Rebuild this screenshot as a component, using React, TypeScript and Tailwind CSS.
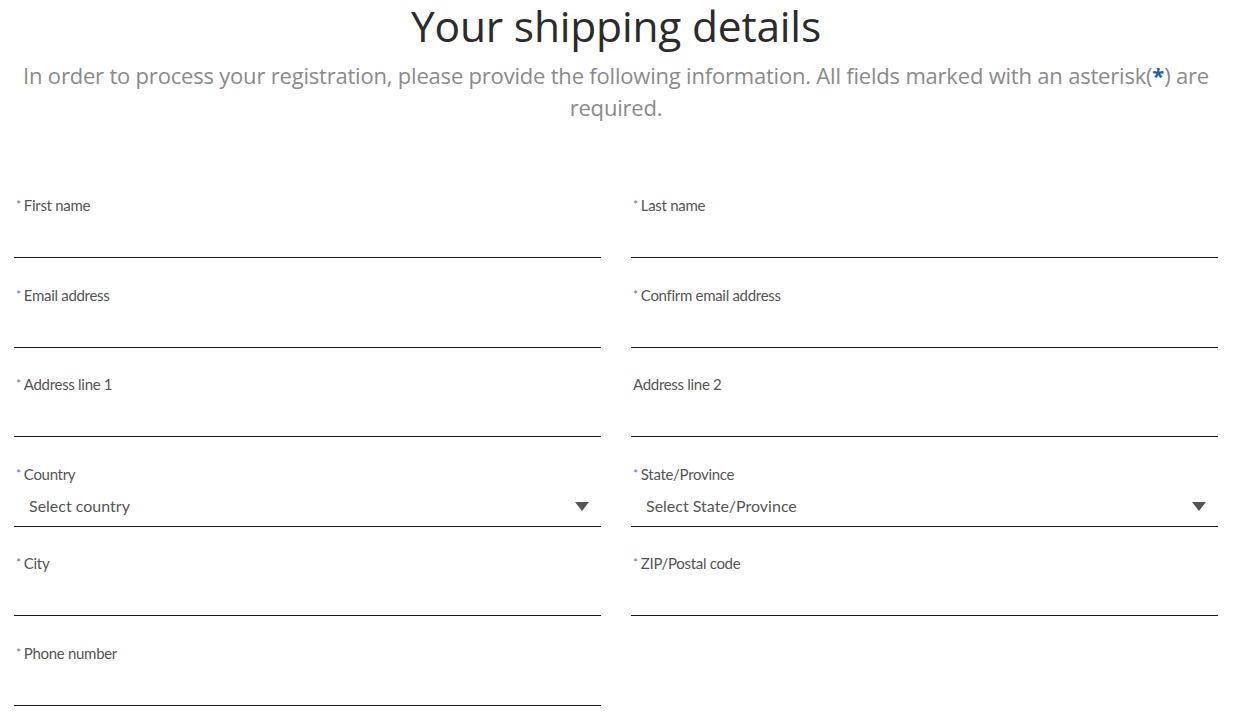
import React from 'react';

type Field = {
    label: string;
    required?: boolean;
    select?: string;
};

const rows: Field[][] = [
    [{label: 'First name', required: true}, {label: 'Last name', required: true}],
    [{label: 'Email address', required: true}, {label: 'Confirm email address', required: true}],
    [{label: 'Address line 1', required: true}, {label: 'Address line 2'}],
    [{label: 'Country', required: true, select: 'Select country'}, {label: 'State/Province', required: true, select: 'Select State/Province'}],
    [{label: 'City', required: true}, {label: 'ZIP/Postal code', required: true}],
    [{label: 'Phone number', required: true}],
];

function FormField({field}: {field: Field}) {
    return (
        <div className="flex flex-col">
            <label className="flex items-start text-[15px] leading-[16px] text-[#555] pl-[2px] tracking-[-0.3px]">
                {field.required && <span className="text-[#4a78c0] text-[12px] leading-[14px] mt-[1px] mr-[3px]">*</span>}
                {field.label}
            </label>
            {field.select ? (
                <div className="h-[45px] border-b-[1.5px] border-[#1a1a1a] flex items-center justify-between pl-[15px] pr-[12px] pt-[5px]">
                    <span className="text-[16px] text-[#555]">{field.select}</span>
                    <svg width="14" height="9" viewBox="0 0 14 9">
                        <path d="M0 0 L14 0 L7 9 Z" fill="#555"/>
                    </svg>
                </div>
            ) : (
                <div className="h-[45px] border-b-[1.5px] border-[#1a1a1a]"></div>
            )}
        </div>
    );
}

export default function App() {
    return (
        <div className="w-[1240px] h-[716px] bg-white overflow-hidden" style={{fontFamily: 'Lato, "Open Sans", sans-serif'}}>
            <div className="text-center pr-[8px]" style={{fontFamily: '"Open Sans", "Noto Sans", sans-serif'}}>
                <h1 className="text-[42.5px] leading-[52px] text-[#2b2b2b] tracking-[-0.2px]">Your shipping details</h1>
                <p className="mt-[7px] px-[16px] text-[22px] leading-[32px] text-[#8a8a8a] tracking-[-0.2px]">
                    In order to process your registration, please provide the following information. All fields marked with an asterisk(<span className="text-[#1f5fb0] font-bold">*</span>) are required.
                </p>
            </div>

            <div className="pl-[14px] pr-[22px] mt-[74px] flex flex-col gap-y-[28.6px]">
                {rows.map((row, i) => (
                    <div key={i} className="grid grid-cols-2 gap-x-[30px]">
                        {row.map((f) => (
                            <FormField key={f.label} field={f}/>
                        ))}
                    </div>
                ))}
            </div>
        </div>
    );
}
